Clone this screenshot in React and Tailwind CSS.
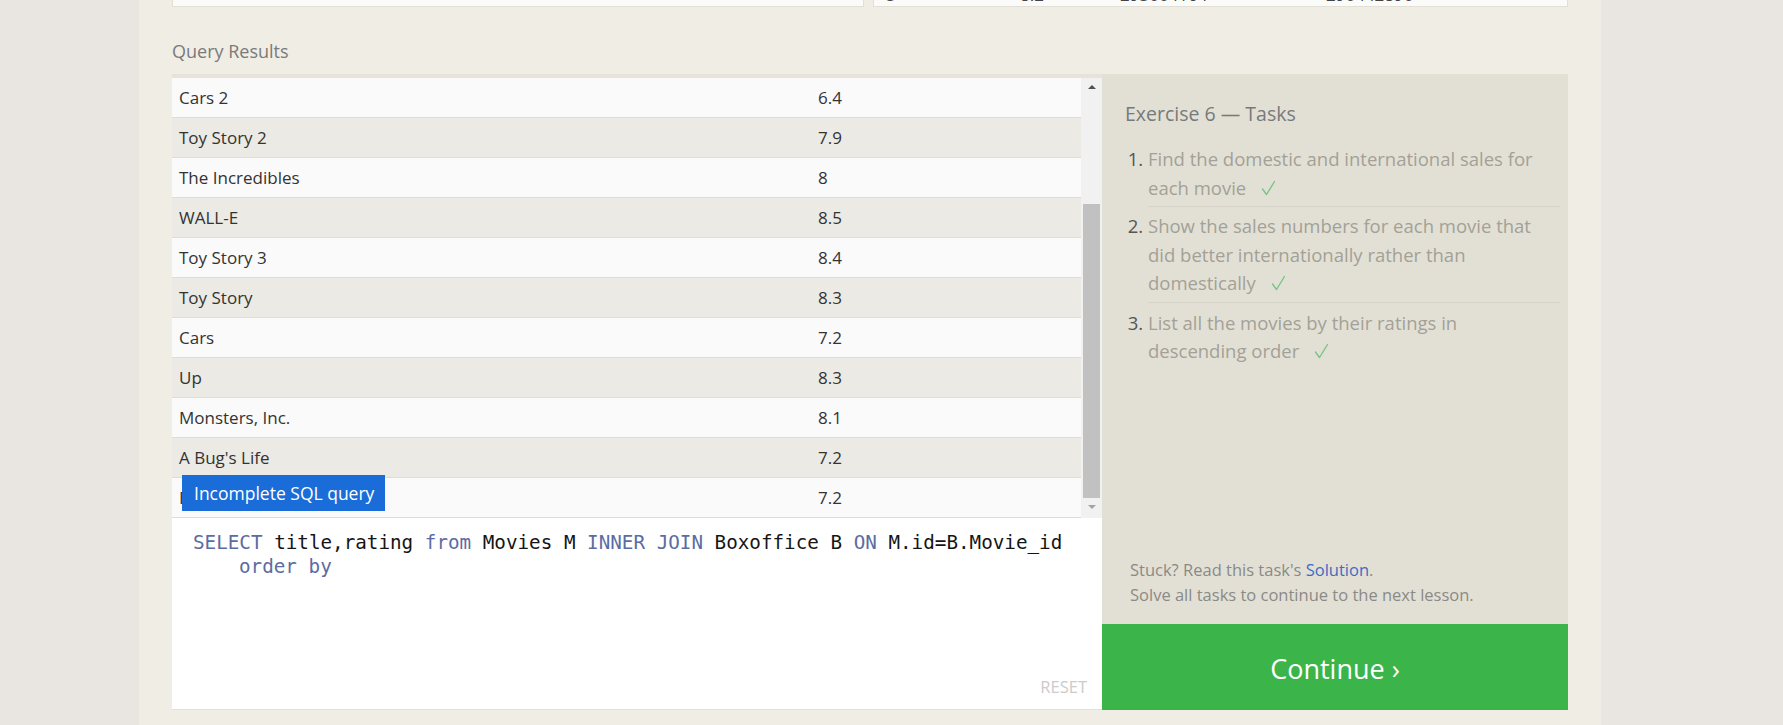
import React from "react";

const rows = [
  ["Cars 2", "6.4"],
  ["Toy Story 2", "7.9"],
  ["The Incredibles", "8"],
  ["WALL-E", "8.5"],
  ["Toy Story 3", "8.4"],
  ["Toy Story", "8.3"],
  ["Cars", "7.2"],
  ["Up", "8.3"],
  ["Monsters, Inc.", "8.1"],
  ["A Bug's Life", "7.2"],
  ["Brave", "7.2"],
];

function Check() {
  return (
    <svg width="15" height="16" viewBox="0 0 15 16" className="ml-[15px] inline-block align-[-1px]">
      <polyline points="1.5,9 5.5,14.5 13.5,1.5" fill="none" stroke="#78c488" strokeWidth="1.4" strokeLinecap="round" strokeLinejoin="round" />
    </svg>
  );
}

function Kw({ children }) {
  return <span className="text-[#5b6ca3]">{children}</span>;
}

export default function App() {
  return (
    <div className="flex h-[725px] w-full overflow-hidden bg-[#e9e6e1] font-['Open_Sans',sans-serif]">
      <div className="w-[139px] shrink-0" />
      <div className="flex w-[1462px] shrink-0 flex-col bg-[#f0ede5] px-[33px]">
        {/* top clipped boxes */}
        <div className="flex h-[7px] gap-[9px]">
          <div className="w-[692px] border-x border-b border-[#e2dfd7] bg-[#fbfbfa]" />
          <div className="flex-1 overflow-hidden border-x border-b border-[#e2dfd7] bg-[#fbfbfa]">
            <div className="mt-[-15px] flex h-[20px] text-[17px] leading-[20px] text-[#444]">
              <span className="ml-[12px] w-[134px]">5</span>
              <span className="w-[100px]">8.2</span>
              <span className="w-[206px]">293004164</span>
              <span>290442890</span>
            </div>
          </div>
        </div>

        <div className="mt-[32px] h-[24px] text-[18px] leading-[24px] text-[#7a7a7a]">Query Results</div>

        <div className="mt-[11px] flex h-[636px]">
          {/* left column */}
          <div className="flex w-[930px] flex-col">
            <div className="flex h-[444px] border-t-[4px] border-[#e5e3db] bg-[#dedcd6]">
              <div className="relative w-[909px]">
                {rows.map((r, i) => (
                  <div
                    key={r[0]}
                    className={`flex h-[40px] items-center border-b border-[#dddcd6] text-[17px] text-[#333] ${
                      i % 2 === 0 ? "bg-[#fafafa]" : "bg-[#ebeae4]"
                    }`}
                  >
                    <div className="w-[646px] pl-[7px]">{r[0]}</div>
                    <div>{r[1]}</div>
                  </div>
                ))}
                <div className="absolute left-[10px] top-[397px] flex h-[36px] w-[203px] items-center bg-[#1a6dd8] pl-[12px] text-[17.5px] text-white">
                  Incomplete SQL query
                </div>
              </div>
              <div className="flex w-[21px] flex-col bg-[#f1f1f1]">
                <div className="flex h-[17px] items-center justify-center">
                  <div className="h-0 w-0 border-x-[4px] border-b-[4px] border-x-transparent border-b-[#505050]" />
                </div>
                <div className="h-[109px]" />
                <div className="mx-[2px] h-[294px] bg-[#c1c1c1]" />
                <div className="flex h-[17px] items-center justify-center">
                  <div className="h-0 w-0 border-x-[4px] border-t-[4px] border-x-transparent border-t-[#a3a3a3]" />
                </div>
              </div>
            </div>
            <div className="relative flex-1 border-b border-[#e2e0d9] bg-white pl-[21px] pt-[13px] font-['DejaVu_Sans_Mono',monospace] text-[19.25px] leading-[24px] text-[#151515]">
              <div className="whitespace-pre">
                <Kw>SELECT</Kw> title,rating <Kw>from</Kw> Movies M <Kw>INNER</Kw> <Kw>JOIN</Kw> Boxoffice B <Kw>ON</Kw> M.id=B.Movie_id
              </div>
              <div className="whitespace-pre pl-[46px]">
                <Kw>order</Kw> <Kw>by</Kw>
              </div>
              <div className="absolute bottom-[11px] right-[15px] font-['Open_Sans',sans-serif] text-[16.5px] leading-[22px] text-[#cbcbcb]">
                RESET
              </div>
            </div>
          </div>

          {/* right column */}
          <div className="flex w-[466px] flex-col">
            <div className="flex flex-1 flex-col justify-between bg-[#e2e0d5]">
              <div className="pl-[23px] pr-[8px] pt-[26px]">
                <div className="h-[28px] text-[19.5px] leading-[28px] text-[#777a7c]">Exercise 6 — Tasks</div>
                <ol className="mt-[13px] list-decimal pl-[23px] text-[18.5px] leading-[28.5px] text-[#a3a197] marker:text-[#555]">
                  <li className="whitespace-nowrap border-b border-[#d6d4c9] pb-[4px] pt-[4px]">
                    Find the domestic and international sales for
                    <br />
                    each movie
                    <Check />
                  </li>
                  <li className="whitespace-nowrap border-b border-[#d6d4c9] pb-[4px] pt-[5px]">
                    Show the sales numbers for each movie that
                    <br />
                    did better internationally rather than
                    <br />
                    domestically
                    <Check />
                  </li>
                  <li className="whitespace-nowrap pt-[6px] pb-[4px]">
                    List all the movies by their ratings in
                    <br />
                    descending order
                    <Check />
                  </li>
                </ol>
              </div>
              <div className="pb-[17px] pl-[28px] text-[16.5px] leading-[25px] text-[#8a8a86]">
                <div>
                  Stuck? Read this task's <span className="text-[#3d6cc4]">Solution</span>.
                </div>
                <div>Solve all tasks to continue to the next lesson.</div>
              </div>
            </div>
            <div className="flex h-[86px] items-center justify-center bg-[#3bb44a] pt-[4px] text-[27px] text-white">
              Continue ›
            </div>
          </div>
        </div>
      </div>
      <div className="flex-1" />
    </div>
  );
}
